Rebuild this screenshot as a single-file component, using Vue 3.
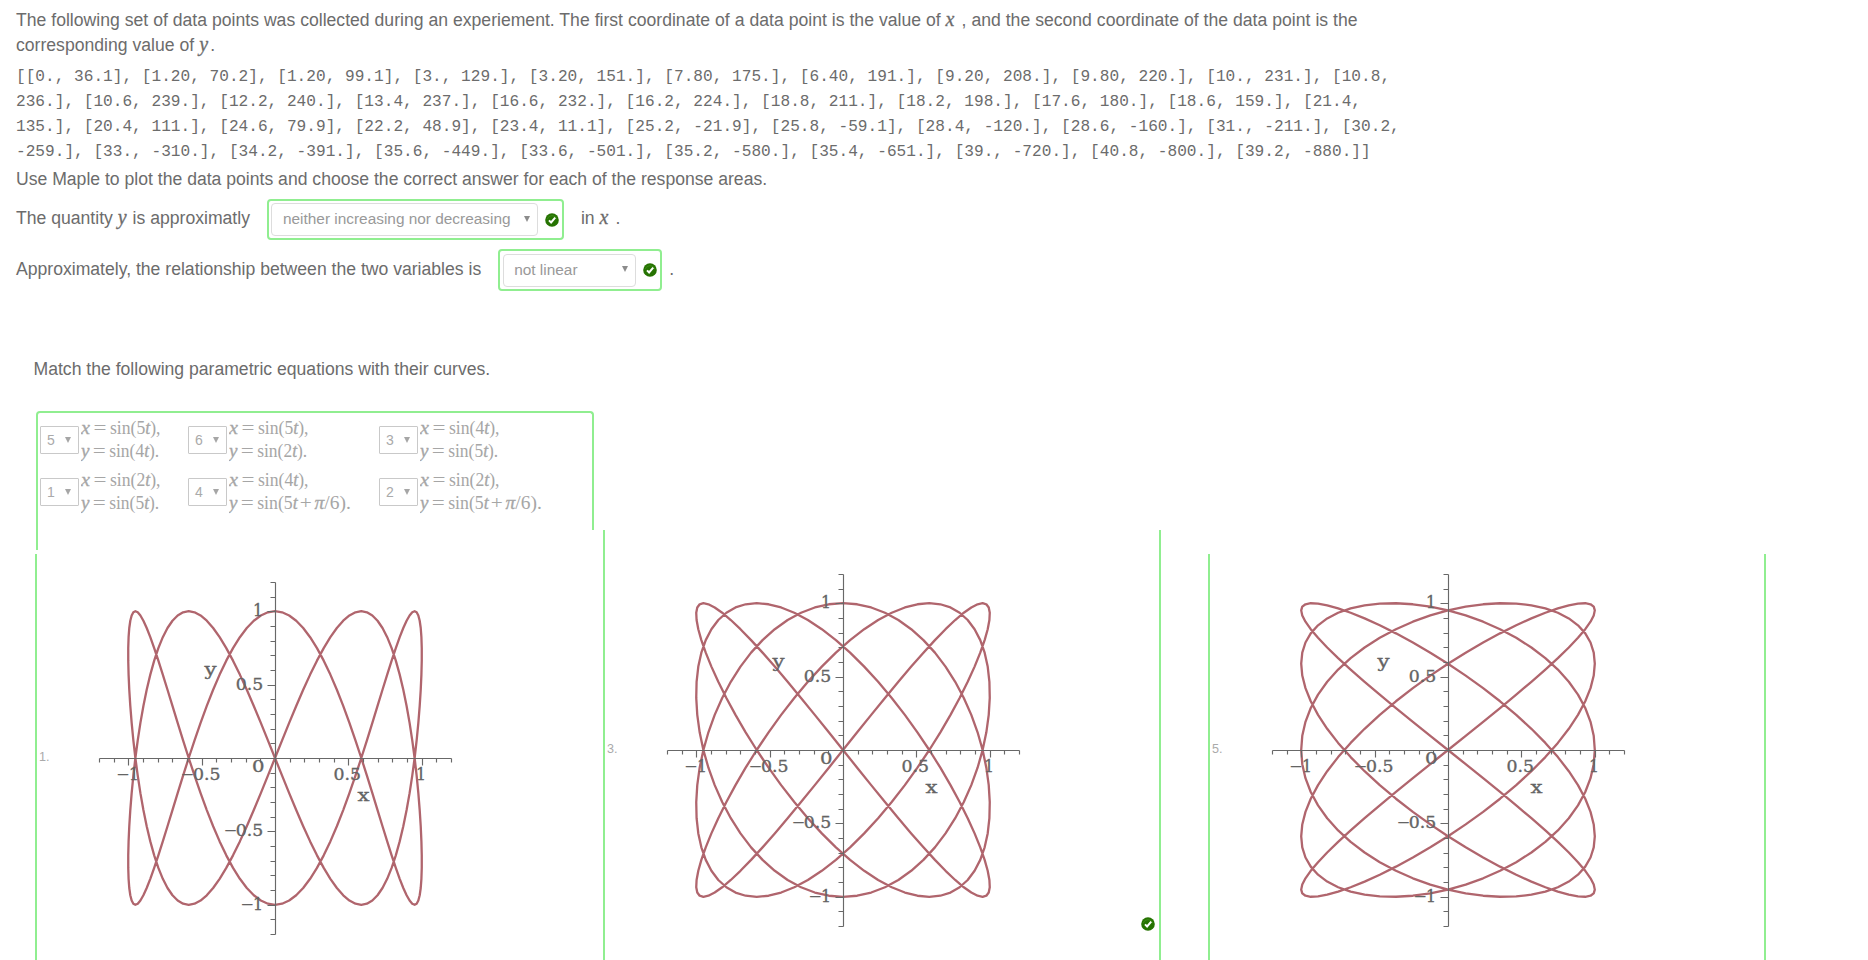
<script setup>
const dataLines = [
  '[[0., 36.1], [1.20, 70.2], [1.20, 99.1], [3., 129.], [3.20, 151.], [7.80, 175.], [6.40, 191.], [9.20, 208.], [9.80, 220.], [10., 231.], [10.8,',
  '236.], [10.6, 239.], [12.2, 240.], [13.4, 237.], [16.6, 232.], [16.2, 224.], [18.8, 211.], [18.2, 198.], [17.6, 180.], [18.6, 159.], [21.4,',
  '135.], [20.4, 111.], [24.6, 79.9], [22.2, 48.9], [23.4, 11.1], [25.2, -21.9], [25.8, -59.1], [28.4, -120.], [28.6, -160.], [31., -211.], [30.2,',
  '-259.], [33., -310.], [34.2, -391.], [35.6, -449.], [33.6, -501.], [35.2, -580.], [35.4, -651.], [39., -720.], [40.8, -800.], [39.2, -880.]]',
]

const matches = [
  { pick: 5, a: 5, b: 4 },
  { pick: 6, a: 5, b: 2 },
  { pick: 3, a: 4, b: 5 },
  { pick: 1, a: 2, b: 5 },
  { pick: 4, a: 4, b: 5, shift: true },
  { pick: 2, a: 2, b: 5, shift: true },
]

const UNIT = 146.8

function curve(a, b) {
  const n = 260
  let d = ''
  for (let i = 0; i < n; i++) {
    const t = (i / n) * Math.PI * 2
    const x = UNIT * Math.sin(a * t)
    const y = -UNIT * Math.sin(b * t)
    d += (i ? 'L' : 'M') + x.toFixed(2) + ' ' + y.toFixed(2)
  }
  return d + 'Z'
}

let axes = 'M-176 0H176M0 -176V176'
for (let i = -12; i <= 12; i++) {
  if (i === 0) continue
  const p = Math.round((i * UNIT) / 10)
  const major = i % 5 === 0
  axes += `M${p} 0v${major ? 7 : 4}M0 ${p}h${major ? -8 : -5}`
}

const labels = [
  { s: '−', x: -159, y: 22, w: 14 },
  { s: '1', x: -146, y: 22, w: 10 },
  { s: '−', x: -94.5, y: 22, w: 14 },
  { s: '0.5', x: -82, y: 22, w: 27.5 },
  { s: '0', x: -23, y: 13.6, w: 12.5 },
  { s: '0.5', x: 58.6, y: 22, w: 27.5 },
  { s: '1', x: 141, y: 22, w: 10 },
  { s: '1', x: -22, y: -141.6, w: 10 },
  { s: '0.5', x: -39.3, y: -67.6, w: 27.5 },
  { s: '−', x: -51.5, y: 78.2, w: 14 },
  { s: '0.5', x: -39.3, y: 78.2, w: 27.5 },
  { s: '−', x: -34.8, y: 152, w: 14 },
  { s: '1', x: -22, y: 152, w: 10 },
  { s: 'x', x: 82.4, y: 43, w: 12 },
  { s: 'y', x: -70.6, y: -82.8, w: 12 },
]

const plots = [
  { id: 1, a: 2, b: 5, cls: 'first' },
  { id: 3, a: 4, b: 5, cls: 'second', ok: true },
  { id: 5, a: 5, b: 4, cls: 'third' },
]
</script>

<template>
  <main class="page">
    <section class="question">
      <p class="prose wide">The following set of data points was collected during an experiement. The first coordinate of a data point is the value of <i class="var">x</i> , and the second coordinate of the data point is the<br />corresponding value of <i class="var">y</i>.</p>
      <div class="data">
        <div v-for="line in dataLines" :key="line">{{ line }}</div>
      </div>
      <p class="prose">Use Maple to plot the data points and choose the correct answer for each of the response areas.</p>

      <div class="answer a1">
        <span>The quantity <i class="var vy">y</i> is approximatly</span>
        <div class="graded g1">
          <div class="select"><span>neither increasing nor decreasing</span><i class="arrow"></i></div>
          <svg class="check" viewBox="0 0 14 14"><circle cx="7" cy="7" r="6.8" fill="#267302" /><path d="M2.2 6.2a5 5 0 0 1 9.6 0" fill="none" stroke="#3b8a16" /><path d="M4 7.4 6.1 9.5 10.2 4.6" fill="none" stroke="#fff" stroke-width="2" /></svg>
        </div>
        <span>in <i class="var">x</i> .</span>
      </div>

      <div class="answer a2">
        <span>Approximately, the relationship between the two variables is</span>
        <div class="graded g2">
          <div class="select"><span>not linear</span><i class="arrow up"></i></div>
          <svg class="check" viewBox="0 0 14 14"><circle cx="7" cy="7" r="6.8" fill="#267302" /><path d="M2.2 6.2a5 5 0 0 1 9.6 0" fill="none" stroke="#3b8a16" /><path d="M4 7.4 6.1 9.5 10.2 4.6" fill="none" stroke="#fff" stroke-width="2" /></svg>
        </div>
        <span>.</span>
      </div>
    </section>

    <p class="prose match-title">Match the following parametric equations with their curves.</p>

    <section class="match-box">
      <div v-for="m in matches" :key="m.pick" class="match">
        <div class="mini"><span>{{ m.pick }}</span><i class="arrow"></i></div>
        <svg class="formula" width="125" height="52">
          <g class="math">
            <text class="it" x="0" y="20.3" textLength="9" lengthAdjust="spacingAndGlyphs">x</text>
            <text x="12.4" y="20.3" textLength="13" lengthAdjust="spacingAndGlyphs">=</text>
            <text x="29" y="20.3" textLength="50.5" lengthAdjust="spacingAndGlyphs">sin({{ m.a }}<tspan class="it">t</tspan>),</text>
            <text class="it" x="0" y="43" textLength="8.5" lengthAdjust="spacingAndGlyphs">y</text>
            <text x="11.8" y="43" textLength="13" lengthAdjust="spacingAndGlyphs">=</text>
            <text v-if="!m.shift" x="28.2" y="43" textLength="50" lengthAdjust="spacingAndGlyphs">sin({{ m.b }}<tspan class="it">t</tspan>).</text>
            <template v-else>
              <text x="28.2" y="43" textLength="40.5" lengthAdjust="spacingAndGlyphs">sin({{ m.b }}<tspan class="it">t</tspan></text>
              <text x="70.8" y="43" textLength="12" lengthAdjust="spacingAndGlyphs">+</text>
              <text x="85.5" y="43" textLength="36.3" lengthAdjust="spacingAndGlyphs"><tspan class="it">π</tspan>/6).</text>
            </template>
          </g>
        </svg>
      </div>
    </section>

    <section class="plots">
      <div v-for="p in plots" :key="p.id" class="panel" :class="p.cls">
        <span class="num">{{ p.id }}.</span>
        <svg class="plot" width="360" height="360" viewBox="-180 -180 360 360">
          <path :d="curve(p.a, p.b)" class="curve" />
          <path :d="axes" class="axes" />
          <text v-for="(l, i) in labels" :key="i" :x="l.x" :y="l.y" :textLength="l.w" lengthAdjust="spacingAndGlyphs" :class="{ thin: l.s === '−' }">{{ l.s }}</text>
        </svg>
        <svg v-if="p.ok" class="check corner" viewBox="0 0 14 14"><circle cx="7" cy="7" r="6.8" fill="#267302" /><path d="M2.2 6.2a5 5 0 0 1 9.6 0" fill="none" stroke="#3b8a16" /><path d="M4 7.4 6.1 9.5 10.2 4.6" fill="none" stroke="#fff" stroke-width="2" /></svg>
      </div>
    </section>
  </main>
</template>

<style>
body { margin: 0; background: #fff; }
</style>

<style scoped>
.page {
  width: 1868px;
  height: 960px;
  overflow: hidden;
  box-sizing: border-box;
  padding-top: 8px;
  background: #fff;
  color: #6c6c6c;
  font: 17.6px/25px "Liberation Sans", Arial, sans-serif;
  white-space: nowrap;
}
.question { padding-left: 16px; height: 335px; }
.prose { margin: 0; }
.wide { word-spacing: 0.08px; }
.var {
  display: inline-block;
  font: italic 20px/0 "Liberation Serif", "Times New Roman", serif;
  -webkit-text-stroke: 0.3px currentColor;
  width: 11px;
}
.vy { width: 10px; }
.data {
  margin: 7px 0 2px;
  font: 16.145px/25px "Liberation Mono", Consolas, monospace;
  white-space: pre;
}
.answer { display: flex; align-items: center; }
.a1 { margin-top: 7px; height: 41px; }
.a2 { margin-top: 9px; height: 42px; }
.answer > span { position: relative; top: -1px; }
.graded {
  box-sizing: border-box;
  display: flex;
  align-items: center;
  height: 100%;
  border: 2px solid #90ee90;
  border-radius: 4px;
  padding: 0 3px 0 2px;
  justify-content: space-between;
}
.g1 { width: 297px; margin: 0 17px 0 17px; }
.g2 { width: 164px; margin: 0 7px 0 17px; padding-left: 3px; }
.select {
  box-sizing: border-box;
  display: flex;
  align-items: center;
  justify-content: space-between;
  height: 33px;
  width: 267px;
  border: 1px solid #ddd;
  border-radius: 4px;
  padding: 0 7px 2px 11px;
  color: #999;
  font-size: 15.4px;
}
.g2 .select { width: 133px; padding-left: 10px; }
.arrow {
  width: 0;
  height: 0;
  border: 3.5px solid transparent;
  border-top: 6.5px solid #8c8c8c;
  border-bottom: 0;
}
.arrow.up { margin-bottom: 1px; }
.check { width: 14px; height: 14px; display: block; }
.match-title { margin: 14px 0 0 33.5px; height: 54px; }
.match-box {
  position: relative;
  box-sizing: border-box;
  margin-left: 36px;
  width: 558px;
  height: 119px;
  border: 2px solid #90ee90;
  border-bottom: 0;
  border-radius: 4px 4px 0 0;
  padding: 1px 0 0 2px;
  display: grid;
  grid-template-columns: 148px 191px 1fr;
  grid-template-rows: 52px 52px;
}
.match-box::before {
  content: "";
  position: absolute;
  left: -2px;
  top: 117px;
  width: 2px;
  height: 20px;
  background: #90ee90;
}
.match { display: flex; align-items: flex-start; }
.mini {
  flex: none;
  box-sizing: border-box;
  display: flex;
  align-items: center;
  justify-content: space-between;
  width: 39px;
  height: 28px;
  margin: 12px 2px 0 0;
  padding: 0 7px 0 6px;
  border: 1px solid #c9c9c9;
  border-radius: 1px;
  color: #aaa;
  font-size: 14px;
}
.mini .arrow { border-top-color: #a6a6a6; }
.formula { display: block; flex: none; margin-right: -20px; }
.math {
  font: 18.5px "Liberation Serif", "Times New Roman", serif;
  fill: #a6a6a6;
}
.it { font-style: italic; stroke: #a6a6a6; stroke-width: 0.3px; }
.plots {
  display: flex;
  align-items: flex-end;
  height: 430px;
  padding-left: 35px;
}
.panel {
  position: relative;
  box-sizing: border-box;
  width: 558px;
  height: 406px;
  border: solid #90ee90;
  border-width: 0 2px;
  display: flex;
  align-items: flex-start;
}
.first { border-right: 0; width: 568px; }
.second { height: 430px; margin-right: 47px; }
.num { width: 55px; padding: 190px 0 0 2px; box-sizing: border-box; font-size: 12.6px; color: #aaa; }
.plot { margin: 24px 0 0 3px; display: block; }
.first .num { padding-top: 191px; }
.second .num { padding-top: 207px; }
.third .num { padding-top: 183px; }
.second .plot { margin-top: 40px; }
.third .plot { margin-top: 16px; }
.plot text { font: 16.4px "DejaVu Serif", serif; fill: #646464; stroke: #646464; stroke-width: 0.35px; }
.plot .thin { stroke: none; }
.curve { fill: none; stroke: #b0656d; stroke-width: 2.3; stroke-linejoin: round; }
.axes { fill: none; stroke: #686868; stroke-width: 1.15; transform: translate(0.5px, 0.5px); }
.corner { position: absolute; right: 4px; bottom: 29px; }
</style>
